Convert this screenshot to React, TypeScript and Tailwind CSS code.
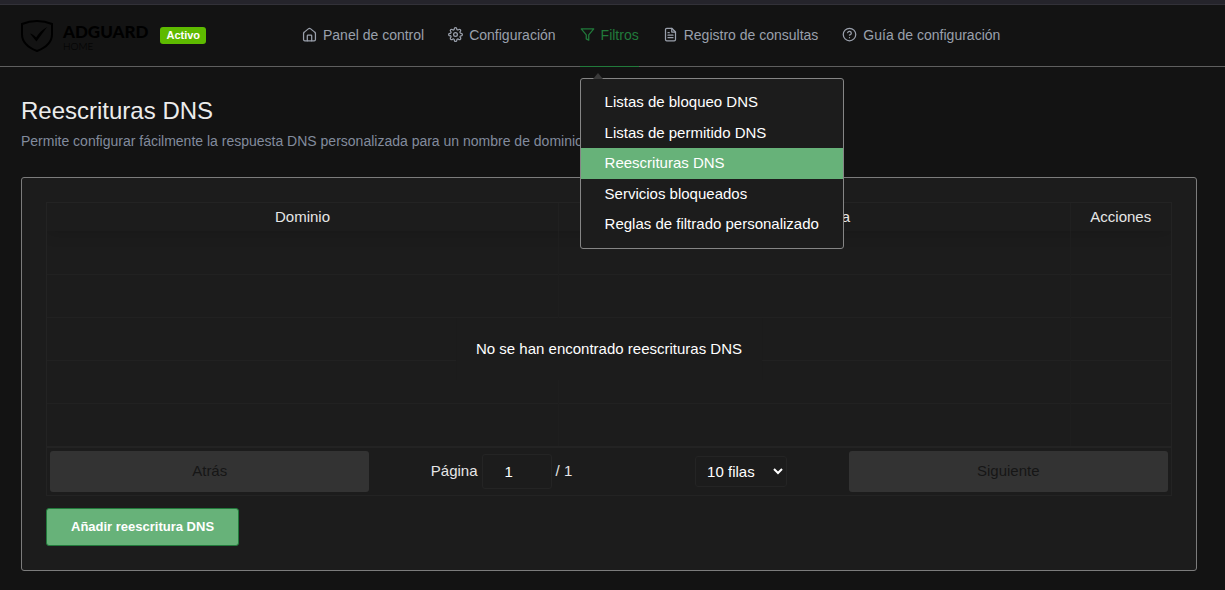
import React from "react";

const navIcon = "h-[15px] w-[15px] shrink-0";

function Icon({ children }: { children: React.ReactNode }) {
  return (
    <svg className={navIcon} viewBox="0 0 24 24" fill="none" stroke="currentColor" strokeWidth="2" strokeLinecap="round" strokeLinejoin="round" aria-hidden="true">
      {children}
    </svg>
  );
}

const HomeIcon = () => (
  <Icon>
    <path d="M2.500 10.500a3 3 0 0 1 1.200-2.300l6.400-5.200a3 3 0 0 1 3.800 0l6.400 5.200a3 3 0 0 1 1.200 2.300V20a2 2 0 0 1-2 2h-15a2 2 0 0 1-2-2z" />
    <path d="M8.500 22v-8a1 1 0 0 1 1-1h5a1 1 0 0 1 1 1v8" />
  </Icon>
);

const GearIcon = () => (
  <Icon>
    <circle cx="12" cy="12" r="3" />
    <path d="M19.4 15a1.65 1.65 0 0 0 .33 1.82l.06.06a2 2 0 1 1-2.83 2.83l-.06-.06a1.65 1.65 0 0 0-2.8 1.17V21a2 2 0 0 1-4 0v-.09a1.65 1.65 0 0 0-2.88-1.26l-.06.06a2 2 0 1 1-2.83-2.83l.06-.06A1.65 1.65 0 0 0 3.17 14H3a2 2 0 0 1 0-4h.09a1.65 1.65 0 0 0 1.26-2.88l-.06-.06a2 2 0 1 1 2.83-2.83l.06.06A1.65 1.65 0 0 0 10 3.17V3a2 2 0 0 1 4 0v.09a1.65 1.65 0 0 0 2.82 1.17l.06-.06a2 2 0 1 1 2.83 2.83l-.06.06A1.65 1.65 0 0 0 20.83 10H21a2 2 0 0 1 0 4h-.09a1.65 1.65 0 0 0-1.51 1z" />
  </Icon>
);

const FilterIcon = () => (
  <Icon>
    <path d="M22 3H2l8 9.46V19l4 2v-8.54z" />
  </Icon>
);

const LogIcon = () => (
  <Icon>
    <path d="M14 2H6a2 2 0 0 0-2 2v16a2 2 0 0 0 2 2h12a2 2 0 0 0 2-2V8z" />
    <path d="M14 2v6h6M16 13H8M16 17H8M10 9H8" />
  </Icon>
);

const HelpIcon = () => (
  <Icon>
    <circle cx="12" cy="12" r="10" />
    <path d="M9.09 9a3 3 0 0 1 5.83 1c0 2-3 3-3 3M12 17h.01" />
  </Icon>
);

function Logo() {
  return (
    <a href="#inicio" aria-label="AdGuard Home" className="flex items-center gap-2.5 text-black">
      <svg className="h-8 w-8" viewBox="0 0 32 32" fill="none" stroke="currentColor" aria-hidden="true">
        <path d="M16 1C11 1 5.600 2.100 1 4v10.200C1 20.600 5.800 27 16 31c10.200-4 15-10.400 15-16.800V4C26.400 2.100 21 1 16 1z" strokeWidth="2" />
        <path d="M9 13.600c2.200.4 4.300 2.100 6.100 3.900 3-4.700 6-7.900 11-10.600L15.400 21.400z" fill="currentColor" stroke="none" />
      </svg>
      <span className="flex flex-col pt-1 font-[Lato]">
        <span className="text-[17px] leading-4 font-black">ADGUARD</span>
        <span className="text-[10px] leading-3 font-light">HOME</span>
      </span>
    </a>
  );
}

const filters = [
  "Listas de bloqueo DNS",
  "Listas de permitido DNS",
  "Reescrituras DNS",
  "Servicios bloqueados",
  "Reglas de filtrado personalizado",
];

function FiltersMenu() {
  return (
    <div className="absolute top-[73px] left-0 z-10 grid h-[171px] w-max auto-rows-fr rounded-[3px] border border-[#858585] bg-[#1c1c1c] py-2">
      <svg className="absolute -top-[6px] left-3 h-1.5 w-2.5" viewBox="0 0 10 6" aria-hidden="true">
        <path d="M0 6 5 0l5 6z" fill="#3a3a3a" />
      </svg>
      {filters.map((name) => (
        <a
          key={name}
          href="#filtros"
          className={
            name === "Reescrituras DNS"
              ? "flex items-center bg-[#67b279] px-6 pb-px text-[15px] text-white"
              : "flex items-center px-6 pb-px text-[15px] text-white"
          }
        >
          {name}
        </a>
      ))}
    </div>
  );
}

const link = "flex items-center gap-1.5 border-b border-transparent pb-0.5 whitespace-nowrap";

function Header() {
  return (
    <header className="border-t-4 border-[#25242b]">
      <div className="flex h-[63px] border-t border-b border-t-[#323138] border-b-[#5f5f5f] pl-[21px]">
        <div className="flex w-[281px] shrink-0 items-center gap-3">
          <Logo />
          <span className="rounded-[3px] bg-[#5eba00] px-1.5 text-[11px] leading-[17px] font-bold text-white">Activo</span>
        </div>
        <nav className="-mb-px flex gap-6 text-sm text-[#9aa0ac]">
          <a href="#panel" className={link}><HomeIcon />Panel de control</a>
          <a href="#configuracion" className={link}><GearIcon />Configuración</a>
          <div className="relative flex">
            <a href="#filtros" aria-expanded="true" className="flex items-center gap-1.5 border-b border-[#217a3b] pb-0.5 whitespace-nowrap text-[#217a3b]"><FilterIcon />Filtros</a>
            <FiltersMenu />
          </div>
          <a href="#registro" className={link}><LogIcon />Registro de consultas</a>
          <a href="#guia" className={link}><HelpIcon />Guía de configuración</a>
        </nav>
      </div>
    </header>
  );
}

const emptyRows = [0, 1, 2, 3, 4];

function RewritesTable() {
  return (
    <div className="relative overflow-hidden border border-[#232323]">
      <table className="w-full table-fixed border-collapse text-[15px] text-[#e6e6e6]">
        <thead>
          <tr className="h-7 shadow-[0_2px_15px_rgba(0,0,0,0.15)]">
            <th scope="col" className="border-r border-[#202020] font-normal">Dominio</th>
            <th scope="col" className="border-r border-[#202020] font-normal">Respuesta</th>
            <th scope="col" className="w-[101px] font-normal">Acciones</th>
          </tr>
        </thead>
        <tbody>
          {emptyRows.map((row) => (
            <tr key={row} className="h-[43px] border-b border-[#212121] last:border-b-0">
              <td className="border-r border-[#1e1e1e]" />
              <td className="border-r border-[#1e1e1e]" />
              <td />
            </tr>
          ))}
        </tbody>
      </table>
      <p className="absolute top-1/2 left-1/2 -translate-x-1/2 -translate-y-1/2 bg-[#1c1c1c] p-5 text-[15px] leading-[22px] whitespace-nowrap text-white">
        No se han encontrado reescrituras DNS
      </p>
      <div className="flex items-center border-t-2 border-[#232323] p-[3px] text-[15px] text-[#e6e6e6]">
        <button type="button" disabled className="h-[41px] min-w-0 flex-2 rounded-[3px] bg-[#333] text-[#161616]">Atrás</button>
        <div className="flex min-w-0 flex-3 items-center justify-around">
          <span className="flex items-center gap-1 whitespace-nowrap">
            <label htmlFor="page">Página</label>
            <input id="page" type="text" inputMode="numeric" defaultValue="1" className="h-[35px] w-[70px] rounded-[3px] border border-[#242424] bg-transparent pr-4 text-center text-white" />
            / 1
          </span>
          <select aria-label="Filas por página" className="h-[31px] w-[92px] rounded-[3px] border border-[#242424] bg-[#1c1c1c] px-[7px] text-white">
            <option>10 filas</option>
            <option>20 filas</option>
            <option>50 filas</option>
          </select>
        </div>
        <button type="button" disabled className="h-[41px] min-w-0 flex-2 rounded-[3px] bg-[#333] text-[#161616]">Siguiente</button>
      </div>
    </div>
  );
}

export default function App() {
  return (
    <div className="min-h-screen bg-[#131313] font-['Liberation_Sans',Arial,sans-serif]">
      <Header />
      <main className="pt-[26px] pr-7 pb-[19px] pl-[21px]">
        <h1 className="text-2xl leading-9 text-[#ececec]">Reescrituras DNS</h1>
        <p className="text-sm leading-6 text-[#828b9d]">
          Permite configurar fácilmente la respuesta DNS personalizada para un nombre de dominio específico.
        </p>
        <section className="mt-6 rounded-[3px] border border-[#7c7c7c] bg-[#1c1c1c] p-6">
          <RewritesTable />
          <button type="button" className="mt-3 h-[38px] rounded-[3px] border border-[#217a3b] bg-[#67b279] px-6 text-[13px] font-bold text-white">
            Añadir reescritura DNS
          </button>
        </section>
      </main>
    </div>
  );
}
